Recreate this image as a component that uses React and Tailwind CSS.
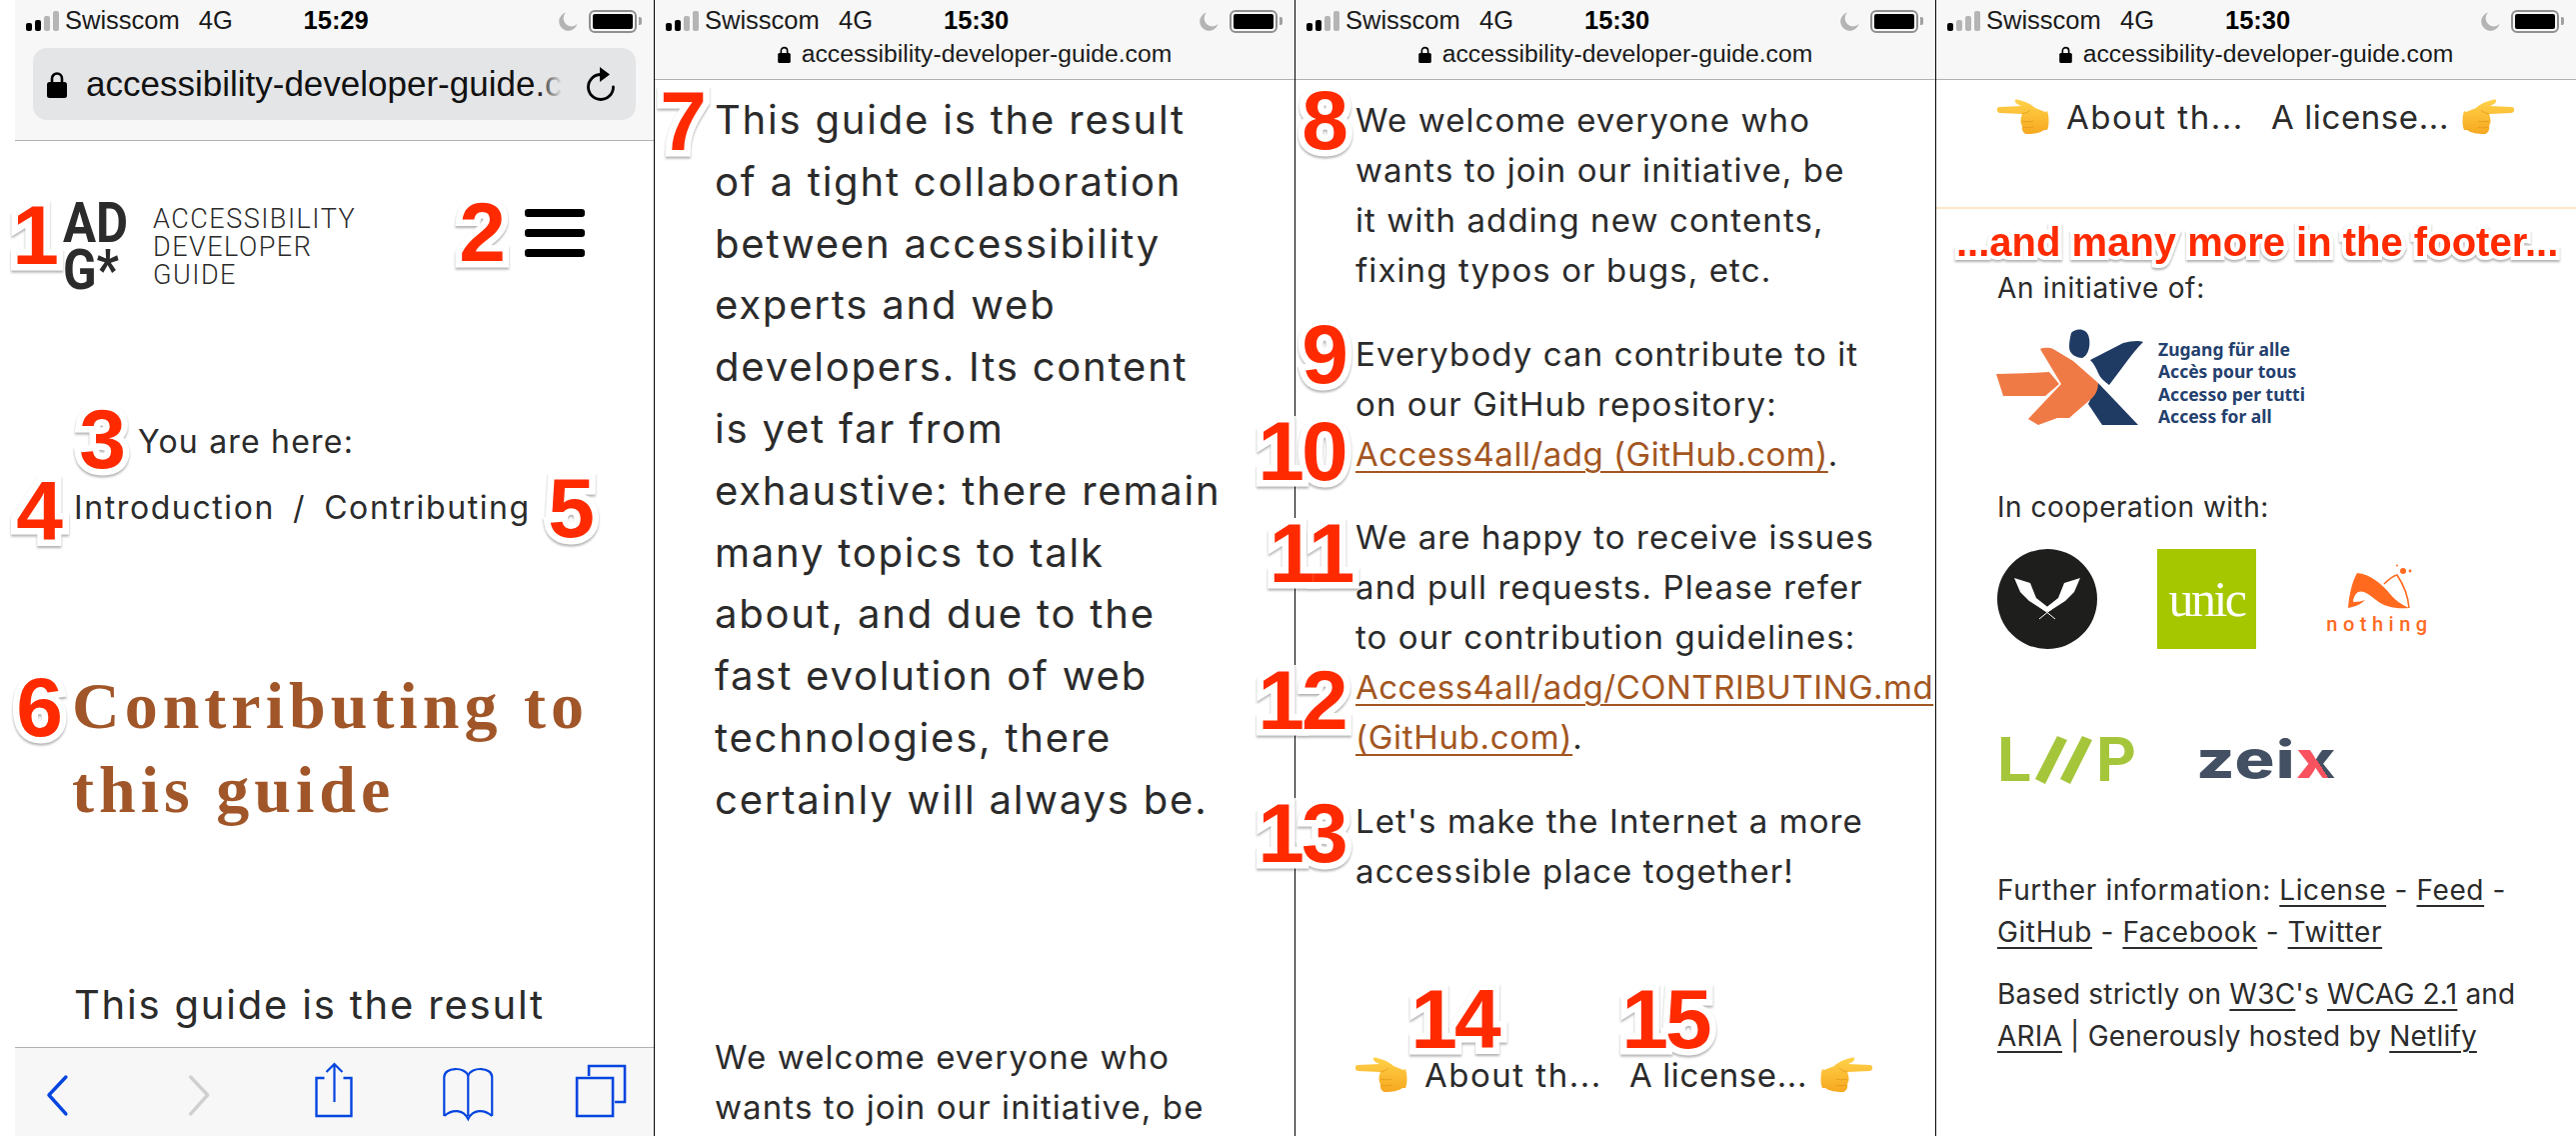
import React from "react";

function Signal({ black }) {
  const bars = ["h-[8px]", "h-[11px]", "h-[15px]", "h-[20px]"];
  return (
    <div className="flex items-end gap-[3px] w-[33px] h-[20px] shrink-0">
      {bars.map((h, i) => (
        <div key={h} className={`${h} w-[6px] rounded-[2px] ${i < black ? "bg-black" : "bg-[#b5b5b5]"}`} />
      ))}
    </div>
  );
}

function Moon() {
  return (
    <svg width="19" height="19" viewBox="0 0 19 19" className="shrink-0">
      <path d="M7 0.5A9.3 9.3 0 1 0 18.5 12 8 8 0 0 1 7 0.5Z" fill="#b4b4b4" />
    </svg>
  );
}

function Battery() {
  return (
    <div className="flex items-center shrink-0">
      <div className="w-[48px] h-[23px] rounded-[6px] border-2 border-[#8f8f8f] p-[2px]">
        <div className="w-full h-full bg-black rounded-[2px]" />
      </div>
      <div className="w-[3px] h-[8px] ml-[2px] bg-[#a0a0a0] rounded-r-[2px]" />
    </div>
  );
}

function Status({ time, black = 2 }) {
  return (
    <div className="flex items-center h-[42px] pl-[11px] pr-[12px] font-['Liberation_Sans',sans-serif] text-[25.5px] text-[#1a1a1a] leading-none">
      <Signal black={black} />
      <span className="w-[134px] ml-[6px] whitespace-nowrap">Swisscom</span>
      <span className="w-[105px] whitespace-nowrap">4G</span>
      <span className="font-bold w-[256px] whitespace-nowrap text-black">{time}</span>
      <Moon />
      <div className="ml-[11px]">
        <Battery />
      </div>
    </div>
  );
}

function Lock({ w = 13, h = 17 }) {
  return (
    <svg width={w} height={h} viewBox="0 0 20 27" className="shrink-0">
      <path d="M5 12V7.5a5 5 0 0 1 10 0V12" fill="none" stroke="#000" strokeWidth="2.6" />
      <rect x="0" y="11" width="20" height="16" rx="2.5" fill="#000" />
    </svg>
  );
}

function SmallHeader({ time, black }) {
  return (
    <header className="h-[80px] bg-[#f7f7f7] border-b border-[#b2b2b2] shrink-0">
      <Status time={time} black={black} />
      <div className="flex items-center justify-center gap-[11px] h-[22px] mt-[1px] font-['Liberation_Sans',sans-serif] text-[24.7px] text-[#1a1a1a] leading-none">
        <Lock />
        <span className="whitespace-nowrap">accessibility-developer-guide.com</span>
      </div>
    </header>
  );
}

function Toolbar() {
  return (
    <footer className="h-[89px] shrink-0 bg-[#f7f7f7] border-t border-[#b2b2b2] flex items-start">
      <svg width="640" height="88" viewBox="0 0 640 88" fill="none" stroke="#0545df">
        <path d="M51 29 34 47 51 66" strokeWidth="3.4" strokeLinecap="round" strokeLinejoin="round" />
        <path d="M176 29 193 47 176 66" stroke="#d0d0d0" strokeWidth="3.4" strokeLinecap="round" strokeLinejoin="round" />
        <path d="M310 30h-8v38h35V30h-8" strokeWidth="2.4" />
        <path d="M320 54V16M312 24l8-8 8 8" strokeWidth="2.2" />
        <path d="M430 68V29c0-10 21-11 24-1v40M454 28c3-10 24-9 24 1v39M430 68c8-7 19-7 24 3 5-10 16-10 24-3" strokeWidth="2.2" />
        <path d="M563 30h36v38h-36z" strokeWidth="2.6" />
        <path d="M575 28V18h36v36h-10" strokeWidth="2.6" />
      </svg>
    </footer>
  );
}

function Hand({ flip }) {
  const id = flip ? "hr" : "hl";
  return (
    <svg width="52" height="36" viewBox="0 0 52 36" className={`shrink-0 ${flip ? "-scale-x-100" : ""}`}>
      <defs>
        <linearGradient id={id} x1="0" y1="0" x2="0" y2="1">
          <stop offset="0" stopColor="#ffd24a" />
          <stop offset="1" stopColor="#f6a81f" />
        </linearGradient>
      </defs>
      <path
        d="M2 8 24 7 20 5C17 3 17 0 20 .5 27 2 34 5 38 9L48 13 50 12C52 18 52 26 50 31L47 31C43 34 36 35 30 35 26 35 24 30 25 27 23 24 23 20 25 15L3 14C-1 14-1 8 2 8Z"
        fill={`url(#${id})`}
      />
      <path d="M25 15C29 14 31 13 33 11M25 22c5 1 8 1 11 0M26 28c4 1 7 1 10 0" stroke="#e5951a" strokeWidth="0.8" fill="none" />
    </svg>
  );
}

function Pager({ className }) {
  return (
    <div className={`flex items-center text-[33px] tracking-[1.5px] text-[#2b2b2b] leading-none whitespace-nowrap ${className}`}>
      <Hand />
      <span className="ml-[17px] w-[205px]">About th...</span>
      <span className="w-[191px] tracking-[0.6px]">A license...</span>
      <Hand flip />
    </div>
  );
}

function Badge({ children, className }) {
  return (
    <span
      className={`absolute -translate-x-1/2 -translate-y-1/2 font-['Liberation_Sans',sans-serif] font-bold text-[84px] leading-none tracking-[-3px] text-[#ff2a00] [-webkit-text-stroke:13px_white] [paint-order:stroke_fill] drop-shadow-[0_2px_1px_rgba(0,0,0,0.3)] ${className}`}
    >
      {children}
    </span>
  );
}

function Lines({ items, className }) {
  return (
    <p className={className}>
      {items.map((l) => (
        <span key={l} className="block whitespace-nowrap">
          {l}
        </span>
      ))}
    </p>
  );
}

function Link({ children, dark }) {
  return (
    <a className={`underline underline-offset-[5px] decoration-2 ${dark ? "text-[#2b2b2b]" : "text-[#a3561f]"}`}>{children}</a>
  );
}

function Panel1() {
  return (
    <section className="w-[640px] h-full border-r border-black flex flex-col shrink-0 overflow-hidden">
      <header className="h-[141px] bg-[#f7f7f7] border-b border-[#b2b2b2] shrink-0">
        <Status time="15:29" />
        <div className="mx-[18px] mt-[6px] h-[72px] rounded-[14px] bg-[#e4e5e7] flex items-center pl-[14px] pr-[20px]">
          <Lock w={20} h={27} />
          <span className="relative ml-[19px] w-[476px] overflow-hidden whitespace-nowrap font-['Liberation_Sans',sans-serif] text-[35px] leading-[40px] text-[#111]">
            accessibility-developer-guide.c
            <span className="absolute right-0 top-0 bottom-0 w-[24px] bg-gradient-to-r from-transparent to-[#e4e5e7]" />
          </span>
          <svg width="30" height="34" viewBox="0 0 30 34" className="ml-auto" fill="none">
            <path d="M15 7.5A12.5 12.5 0 1 0 27.5 20" stroke="#000" strokeWidth="2.8" strokeLinecap="round" />
            <path d="M14 0l10 7.5L14 15Z" fill="#000" />
          </svg>
        </div>
      </header>
      <main className="flex-1 min-h-0 overflow-hidden bg-white text-[#2b2b2b]">
        <div className="flex items-start mt-[59px] pl-[48px] pr-[69px] h-[90px]">
          <div className="w-[90px] font-['Roboto',sans-serif] font-bold text-[56px] leading-[47px] text-[#2b2b2b] origin-left scale-x-[0.88]">
            <div>AD</div>
            <div>G*</div>
          </div>
          <div className="pt-[5px] font-['Roboto',sans-serif] font-light text-[27px] leading-[28px] tracking-[1.5px] text-[#2b2b2b]">
            <div>ACCESSIBILITY</div>
            <div>DEVELOPER</div>
            <div>GUIDE</div>
          </div>
          <div className="ml-auto mt-[9px] flex flex-col gap-[12px] w-[60px]">
            <div className="h-[8px] bg-black rounded-[3px]" />
            <div className="h-[8px] bg-black rounded-[3px]" />
            <div className="h-[8px] bg-black rounded-[3px]" />
          </div>
        </div>
        <p className="ml-[123px] mt-[132px] text-[32px] leading-[40px] tracking-[1.2px] whitespace-nowrap">You are here:</p>
        <p className="ml-[59px] mt-[26px] text-[32px] leading-[40px] tracking-[1.6px] whitespace-nowrap">
          Introduction<span className="mx-[18px]">/</span>Contributing
        </p>
        <h1 className="pl-[57px] mt-[136px] font-['Liberation_Serif',serif] font-bold text-[66px] leading-[84px] tracking-[5px] text-[#a05628]">
          <span className="block whitespace-nowrap">Contributing to</span>
          <span className="block whitespace-nowrap">this guide</span>
        </h1>
        <p className="ml-[59px] mt-[142px] text-[40px] leading-[62px] tracking-[1.8px] whitespace-nowrap">This guide is the result</p>
      </main>
      <Toolbar />
    </section>
  );
}

function Panel2() {
  return (
    <section className="w-[641px] h-full border-r border-black flex flex-col shrink-0 overflow-hidden">
      <SmallHeader time="15:30" />
      <main className="flex-1 pl-[60px] pt-[9px] bg-white text-[#2b2b2b]">
        <Lines
          className="text-[40px] leading-[61.8px] tracking-[1.8px]"
          items={[
            "This guide is the result",
            "of a tight collaboration",
            "between accessibility",
            "experts and web",
            "developers. Its content",
            "is yet far from",
            "exhaustive: there remain",
            "many topics to talk",
            "about, and due to the",
            "fast evolution of web",
            "technologies, there",
            "certainly will always be.",
          ]}
        />
        <Lines
          className="text-[33px] leading-[50px] tracking-[1.1px] mt-[201px]"
          items={["We welcome everyone who", "wants to join our initiative, be"]}
        />
      </main>
    </section>
  );
}

function Panel3() {
  return (
    <section className="w-[641px] h-full border-r border-black flex flex-col shrink-0 overflow-hidden">
      <SmallHeader time="15:30" />
      <main className="flex-1 pl-[60px] pt-[15px] bg-white text-[#2b2b2b] text-[33px] leading-[50px] tracking-[1.1px]">
        <Lines items={["We welcome everyone who", "wants to join our initiative, be", "it with adding new contents,", "fixing typos or bugs, etc."]} />
        <p className="mt-[34px] whitespace-nowrap">
          <span className="block">Everybody can contribute to it</span>
          <span className="block">on our GitHub repository:</span>
          <span className="block tracking-[0.5px]">
            <Link>Access4all/adg (GitHub.com)</Link>.
          </span>
        </p>
        <p className="mt-[33px] whitespace-nowrap">
          <span className="block">We are happy to receive issues</span>
          <span className="block">and pull requests. Please refer</span>
          <span className="block">to our contribution guidelines:</span>
          <span className="block tracking-[0.5px]">
            <Link>Access4all/adg/CONTRIBUTING.md</Link>
          </span>
          <span className="block tracking-[0.7px]">
            <Link>(GitHub.com)</Link>.
          </span>
        </p>
        <Lines className="mt-[34px]" items={["Let's make the Internet a more", "accessible place together!"]} />
        <Pager className="mt-[161px]" />
      </main>
    </section>
  );
}

function XLogo() {
  return (
    <svg width="150" height="98" viewBox="0 0 150 98" className="shrink-0">
      <path d="M76 4c4-5 14-5 17 2 3 8 1 20-6 23-6 0-13-4-13-11 0-5 1-10 2-14Z" fill="#1f3a63" />
      <path d="M95 31 128 14c8-2 15-3 20-1-6 6-11 12-16 19l-18 24c-5-4-9-7-11-12-2-5-4-9-8-13Z" fill="#1f3a63" />
      <path d="M103 54 143 96h-36L93 75Z" fill="#1f3a63" />
      <path d="M45 20c5-2 10-1 13 0l20 12 25 22c0 6-2 11-6 15L74 89h-12l-19 7-10-6 33-35L45 20Z" fill="#f07a45" />
      <path d="M1 45c18 0 35-1 53-2l10 12-14 12H8L1 45Z" fill="#f07a45" />
    </svg>
  );
}

function Panel4() {
  return (
    <section className="w-[640px] h-full flex flex-col shrink-0 overflow-hidden">
      <SmallHeader time="15:30" black={1} />
      <main className="flex-1 bg-white text-[#2b2b2b]">
        <Pager className="ml-[61px] mt-[19px] h-[36px]" />
        <div className="mt-[72px] h-[2px] bg-[#fde6c4]" />
        <div className="pl-[61px] text-[28px] leading-[42px]">
          <p className="mt-[58px] tracking-[0.7px] whitespace-nowrap">An initiative of:</p>
          <div className="flex items-start mt-[20px] -ml-[2px] h-[98px]">
            <XLogo />
            <div className="ml-[13px] mt-[9px] font-['Noto_Sans',sans-serif] font-bold text-[17.5px] leading-[22.3px] text-[#24406e]">
              <div>Zugang für alle</div>
              <div>Accès pour tous</div>
              <div>Accesso per tutti</div>
              <div>Access for all</div>
            </div>
          </div>
          <p className="mt-[59px] tracking-[0.5px] whitespace-nowrap">In cooperation with:</p>
          <div className="flex items-center mt-[21px] h-[100px]">
            <div className="w-[100px] h-[100px] rounded-full bg-[#1e1e1c] flex items-center justify-center shrink-0">
              <svg width="66" height="42" viewBox="0 0 66 42" fill="#fff">
                <path d="M0 0 16 5 22 20 36 31 32 34 15 23 6 14Z" />
                <path d="M66 0 50 5 44 20 30 31 34 34 51 23 60 14Z" />
                <path d="M25 41 41 28M41 41 25 28" stroke="#fff" strokeWidth="1" />
              </svg>
            </div>
            <div className="ml-[60px] w-[99px] h-[100px] bg-[#a5c700] flex items-center justify-center shrink-0 font-['Liberation_Serif',serif] text-[50px] leading-none text-white tracking-[-2.5px]">
              unic
            </div>
            <div className="ml-[71px] w-[105px] flex flex-col items-center shrink-0">
              <svg width="64" height="46" viewBox="0 0 64 46" fill="#ff6a1f">
                <path d="M0 44C1 30 4 18 9 9 22 10 34 20 42 30 48 37 54 41 61 44 48 45 36 43 28 36 20 29 14 26 10 28 7 30 5 34 5 38 10 38 14 37 17 36 12 41 6 43 0 44Z" />
                <path d="M36 20C40 16 45 12 49 11 55 20 60 32 61 44" fill="none" stroke="#ff6a1f" strokeWidth="1.6" />
                <circle cx="55" cy="7" r="3" />
                <circle cx="62" cy="7" r="1.4" />
                <circle cx="49" cy="1.5" r="1" />
              </svg>
              <span className="mt-[4px] font-['Roboto',sans-serif] font-medium text-[20px] leading-[20px] tracking-[5.5px] text-[#ff6a1f]">nothing</span>
            </div>
          </div>
          <div className="flex items-center mt-[87px] h-[48px]">
            <div className="w-[199px] shrink-0 flex items-center font-['Roboto',sans-serif] font-bold text-[62px] leading-none text-[#a5c63b]">
              <span className="w-[38px]">L</span>
              <svg width="58" height="48" viewBox="0 0 58 48" fill="#a5c63b" className="shrink-0">
                <path d="M0 43 10 48 32 4 22 0Z" />
                <path d="M25 43 35 48 57 4 47 0Z" />
              </svg>
              <span className="ml-[3px]">P</span>
            </div>
            <span className="inline-block origin-left scale-x-[1.28] font-['Inter',sans-serif] font-extrabold text-[52px] leading-none tracking-[1px] text-[#434f63]">
              zei
              <span className="bg-[linear-gradient(to_top_right,#f9525f_50%,#434f63_50%)] bg-clip-text text-transparent">x</span>
            </span>
          </div>
          <p className="mt-[85px] whitespace-nowrap tracking-[0.6px]">
            <span className="block">
              Further information: <Link dark>License</Link> - <Link dark>Feed</Link> -
            </span>
            <span className="block">
              <Link dark>GitHub</Link> - <Link dark>Facebook</Link> - <Link dark>Twitter</Link>
            </span>
          </p>
          <p className="mt-[20px] whitespace-nowrap tracking-[0.2px]">
            <span className="block">
              Based strictly on <Link dark>W3C</Link>'s <Link dark>WCAG 2.1</Link> and
            </span>
            <span className="block">
              <Link dark>ARIA</Link> | Generously hosted by <Link dark>Netlify</Link>
            </span>
          </p>
        </div>
      </main>
    </section>
  );
}

export default function App() {
  return (
    <div className="relative flex w-[2577px] h-[1136px] pl-[15px] bg-white overflow-hidden font-['Inter',sans-serif]">
      <Panel1 />
      <Panel2 />
      <Panel3 />
      <Panel4 />
      <Badge className="left-[34px] top-[235px]">1</Badge>
      <Badge className="left-[481px] top-[232px]">2</Badge>
      <Badge className="left-[101px] top-[439px]">3</Badge>
      <Badge className="left-[38px] top-[511px]">4</Badge>
      <Badge className="left-[570px] top-[508px]">5</Badge>
      <Badge className="left-[38px] top-[707px]">6</Badge>
      <Badge className="left-[682px] top-[121px]">7</Badge>
      <Badge className="left-[1324px] top-[120px]">8</Badge>
      <Badge className="left-[1324px] top-[354px]">9</Badge>
      <Badge className="left-[1302px] top-[451px]">10</Badge>
      <Badge className="left-[1311px] top-[553px]">11</Badge>
      <Badge className="left-[1302px] top-[700px]">12</Badge>
      <Badge className="left-[1302px] top-[833px]">13</Badge>
      <Badge className="left-[1455px] top-[1019px]">14</Badge>
      <Badge className="left-[1666px] top-[1019px]">15</Badge>
      <span className="absolute left-[1957px] top-[221px] whitespace-nowrap font-['Liberation_Sans',sans-serif] font-bold text-[40px] leading-[42px] text-[#ff2a00] [-webkit-text-stroke:8px_white] [paint-order:stroke_fill] drop-shadow-[0_2px_1px_rgba(0,0,0,0.3)]">
        ...and many more in the footer...
      </span>
    </div>
  );
}
